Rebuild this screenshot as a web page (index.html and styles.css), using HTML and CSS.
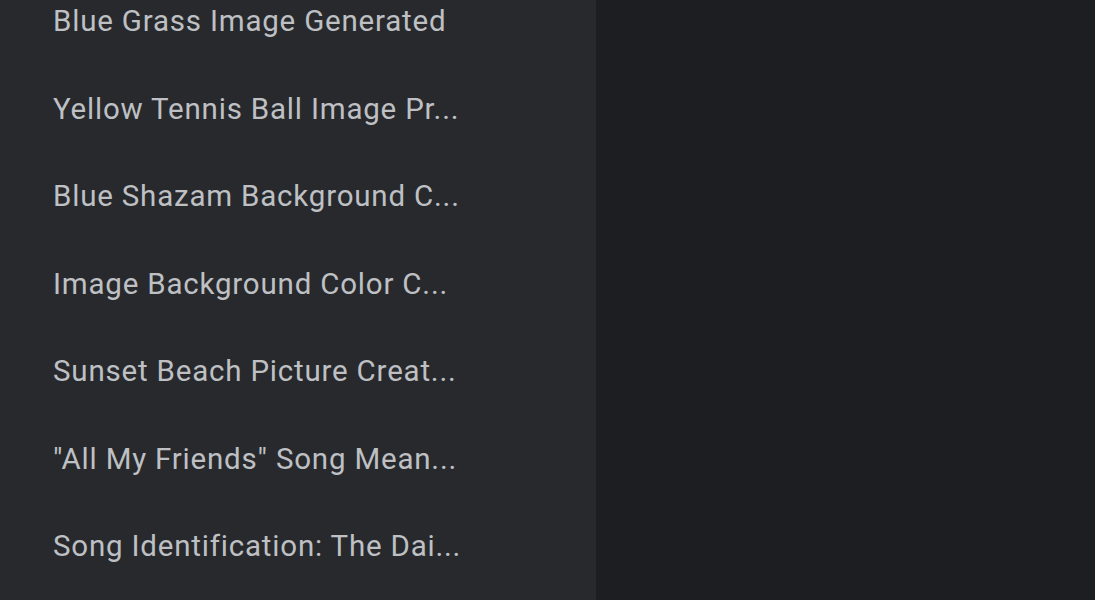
FILE: index.html
```html
<!DOCTYPE html>
<html lang="en">
<head>
    <meta charset="UTF-8">
    <meta name="viewport" content="width=device-width, initial-scale=1.0">
    <title>Recent chats</title>
    <link rel="stylesheet" href="styles.css">
</head>
<body>
    <div class="layout">
        <aside class="sidebar">
            <ul class="chat-list">
                <li class="chat-item">Blue Grass Image Generated</li>
                <li class="chat-item">Yellow Tennis Ball Image Pr...</li>
                <li class="chat-item">Blue Shazam Background C...</li>
                <li class="chat-item">Image Background Color C...</li>
                <li class="chat-item">Sunset Beach Picture Creat...</li>
                <li class="chat-item">"All My Friends" Song Mean...</li>
                <li class="chat-item">Song Identification: The Dai...</li>
            </ul>
        </aside>
        <main class="main"></main>
    </div>
</body>
</html>
```

FILE: styles.css
```css
/* Basic layout */
body {
    margin: 0;
    font-family: Roboto, "Noto Sans", Arial, sans-serif;
    background-color: #1d1e22;
    overflow: hidden;
}
.layout {
    display: flex;
    height: 600px;
}
.sidebar {
    width: 596px;
    background-color: #28292d; /* Slightly lighter panel */
    overflow: hidden;
}
.main {
    flex: 1;
    background-color: #1d1e22;
}
/* Chat history list (titles already shortened) */
.chat-list {
    list-style: none;
    margin: -22px 0 0 0;
    padding: 0 0 0 53px;
}
.chat-item {
    height: 87.5px;
    line-height: 87.5px;
    font-size: 29.5px;
    letter-spacing: 0.8px;
    color: #bec0c4;
    white-space: nowrap;
}
```
